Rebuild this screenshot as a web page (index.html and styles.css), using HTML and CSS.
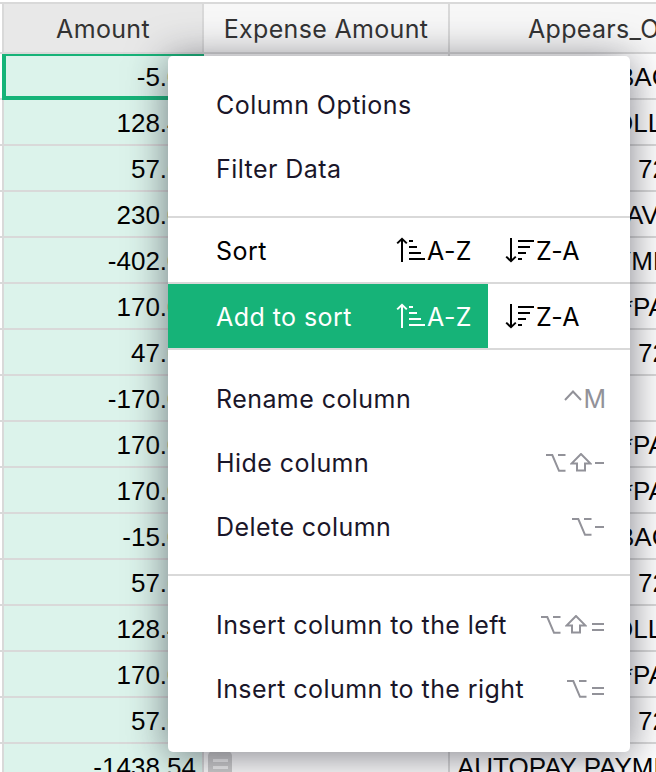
FILE: index.html
```html
<!DOCTYPE html>
<html lang="en">
<head>
<meta charset="utf-8">
<title>Transactions</title>
<link rel="stylesheet" href="styles.css">
</head>
<body>
<svg class="defs" aria-hidden="true">
  <symbol id="asc" viewBox="0 0 30 26"><path d="M6 25V2M1.2 6.4 6 1.8l4.800 4.600M13 4h4M13 10h8M13 16h12M13 22h16"/></symbol>
  <symbol id="desc" viewBox="0 0 30 26"><path d="M6 1v23M1.200 19.600 6 24.200l4.800-4.600M13 4h16M13 10h12M13 16h8M13 22h4"/></symbol>
  <symbol id="opt" viewBox="0 0 20 18"><path d="M0 1h6.300L13 16.800h6.500M12 1H19.500"/></symbol>
  <symbol id="shift" viewBox="0 0 22 19"><path d="M11 1 1.500 10.600H7V17.500h8V10.600h5.500Z"/></symbol>
  <symbol id="ctrl" viewBox="0 0 18 19"><path d="M1 10 9 1.500l8 8.500"/></symbol>
</svg>
<main class="grid">
  <div class="row head"><div class="gutter"></div><div class="cell sel">Amount</div><div class="cell">Expense Amount</div><div class="cell last">Appears_On</div></div>
  <div class="row"><div class="gutter"></div><div class="cell num cursor">-5.00</div><div class="cell"></div><div class="cell last back">BACK</div></div>
  <div class="row"><div class="gutter"></div><div class="cell num">128.43</div><div class="cell"></div><div class="cell last oll">OLL</div></div>
  <div class="row"><div class="gutter"></div><div class="cell num">57.60</div><div class="cell"></div><div class="cell last code">72</div></div>
  <div class="row"><div class="gutter"></div><div class="cell num">230.00</div><div class="cell"></div><div class="cell last av">AV</div></div>
  <div class="row"><div class="gutter"></div><div class="cell num">-402.00</div><div class="cell"></div><div class="cell last ym">YMENT</div></div>
  <div class="row"><div class="gutter"></div><div class="cell num">170.00</div><div class="cell"></div><div class="cell last pa">*PA</div></div>
  <div class="row"><div class="gutter"></div><div class="cell num">47.60</div><div class="cell"></div><div class="cell last code">72</div></div>
  <div class="row"><div class="gutter"></div><div class="cell num">-170.00</div><div class="cell"></div><div class="cell last"></div></div>
  <div class="row"><div class="gutter"></div><div class="cell num">170.00</div><div class="cell"></div><div class="cell last pa">*PA</div></div>
  <div class="row"><div class="gutter"></div><div class="cell num">170.00</div><div class="cell"></div><div class="cell last pa">*PA</div></div>
  <div class="row"><div class="gutter"></div><div class="cell num">-15.00</div><div class="cell"></div><div class="cell last back">BACK</div></div>
  <div class="row"><div class="gutter"></div><div class="cell num">57.60</div><div class="cell"></div><div class="cell last code">72</div></div>
  <div class="row"><div class="gutter"></div><div class="cell num">128.43</div><div class="cell"></div><div class="cell last oll">OLL</div></div>
  <div class="row"><div class="gutter"></div><div class="cell num">170.00</div><div class="cell"></div><div class="cell last pa">*PA</div></div>
  <div class="row"><div class="gutter"></div><div class="cell num">57.60</div><div class="cell"></div><div class="cell last code">72</div></div>
  <div class="row"><div class="gutter"></div><div class="cell num">-1438.54</div><div class="cell formula"><i class="badge"></i></div><div class="cell last">AUTOPAY PAYMENT</div></div>
</main>
<nav class="menu">
  <div class="group">
    <div class="item"><span>Column Options</span></div>
    <div class="item"><span>Filter Data</span></div>
  </div>
  <div class="sort"><div class="up"><span>Sort</span><span class="dir"><svg><use href="#asc"/></svg>A-Z</span></div><div class="down dir"><svg><use href="#desc"/></svg>Z-A</div></div>
  <div class="sort"><div class="up active"><span>Add to sort</span><span class="dir"><svg><use href="#asc"/></svg>A-Z</span></div><div class="down dir"><svg><use href="#desc"/></svg>Z-A</div></div>
  <div class="group">
    <div class="item"><span>Rename column</span><span class="keys letter"><svg class="ctrl"><use href="#ctrl"/></svg>M</span></div>
    <div class="item"><span>Hide column</span><span class="keys"><svg class="opt"><use href="#opt"/></svg><svg class="shift"><use href="#shift"/></svg><b class="minus"></b></span></div>
    <div class="item"><span>Delete column</span><span class="keys"><svg class="opt"><use href="#opt"/></svg><b class="minus"></b></span></div>
  </div>
  <div class="group">
    <div class="item"><span>Insert column to the left</span><span class="keys"><svg class="opt"><use href="#opt"/></svg><svg class="shift"><use href="#shift"/></svg><b class="equal"></b></span></div>
    <div class="item"><span>Insert column to the right</span><span class="keys"><svg class="opt"><use href="#opt"/></svg><b class="equal"></b></span></div>
  </div>
</nav>
</body>
</html>
```
FILE: styles.css
```css
* { box-sizing: border-box; }
body { margin: 0; width: 656px; height: 772px; overflow: hidden; position: relative; background: #fff; }
.defs { position: absolute; width: 0; height: 0; }
.grid { width: 656px; height: 772px; overflow: hidden; padding-top: 2px; font: 26px/46px "Liberation Sans", Arial, sans-serif; color: #000; }
.row { display: grid; grid-template-columns: 4px 200px 246px 206px; height: 46px; }
.gutter, .cell { border-right: 2px solid #d9d9d9; border-bottom: 2px solid #d9d9d9; }
.cell { white-space: nowrap; overflow: hidden; padding: 0 7px; }
.last { border-right: 0; }
.head { height: 52px; font: 25px/50px Inter, sans-serif; letter-spacing: 0.32px; color: #333; }
.head .gutter, .head .cell { border-top: 2px solid #d9d9d9; }
.head .cell { background: #f7f7f7; text-align: center; }
.head .sel { background: #e8e8e8; }
.head .last { text-align: left; padding-left: 78px; }
.num { text-align: right; padding-right: 6px; background: #dcf3eb; }
.cursor { margin-left: -2px; border: 4px solid #16b378; border-top-width: 2px; padding-right: 4px; line-height: 42px; }
.back { padding-left: 167px; }
.oll { padding-left: 163px; }
.code { padding-left: 188px; }
.av { padding-left: 176px; }
.ym { padding-left: 164px; }
.pa { padding-left: 173px; }
.formula { padding: 7px 4px; }
.badge { display: block; width: 24px; height: 30px; border-radius: 5px; background: linear-gradient(#f2f2f2, #f2f2f2) 5px 8px / 15px 3px no-repeat, linear-gradient(#f2f2f2, #f2f2f2) 5px 15px / 15px 3px no-repeat, #cfcfcf; }

.menu { position: absolute; left: 168px; top: 56px; width: 462px; height: 696px; border-radius: 5px; background: #fff; box-shadow: 0 4px 40px rgba(38, 38, 51, 0.6); font: 25px/66px Inter, sans-serif; letter-spacing: 0.44px; color: #1a1629; }
.group { padding: 16px 0; }
.item { display: flex; justify-content: space-between; height: 64px; padding: 0 26px 0 48px; }
.sort { display: flex; height: 66px; border-top: 2px solid #d9d9d9; color: #000; }
.sort + .group, .group + .group { border-top: 2px solid #d9d9d9; }
.up { display: flex; justify-content: space-between; width: 320px; padding: 0 16px 0 48px; }
.active { background: #16b378; color: #fff; }
.dir { display: flex; align-items: center; height: 64px; padding-top: 2px; line-height: 64px; }
.dir svg { width: 30px; height: 26px; margin: -2px 1px 0 0; }
.down { padding-left: 17px; }
svg { fill: none; stroke: currentColor; stroke-width: 2; }
.keys { display: flex; align-items: center; height: 64px; padding-top: 1px; color: #929299; letter-spacing: 0; }
.letter { margin-right: -2px; padding-top: 2px; }
.opt { width: 20px; height: 18px; }
.shift { width: 22px; height: 19px; margin-left: 4px; }
.ctrl { width: 18px; height: 19px; margin-right: 1px; }
.minus { width: 9px; height: 2px; margin: 1px 0 0 3px; background: currentColor; }
.equal { width: 12px; height: 8px; margin: 4px 0 0 5px; border: solid currentColor; border-width: 2px 0; }
```
